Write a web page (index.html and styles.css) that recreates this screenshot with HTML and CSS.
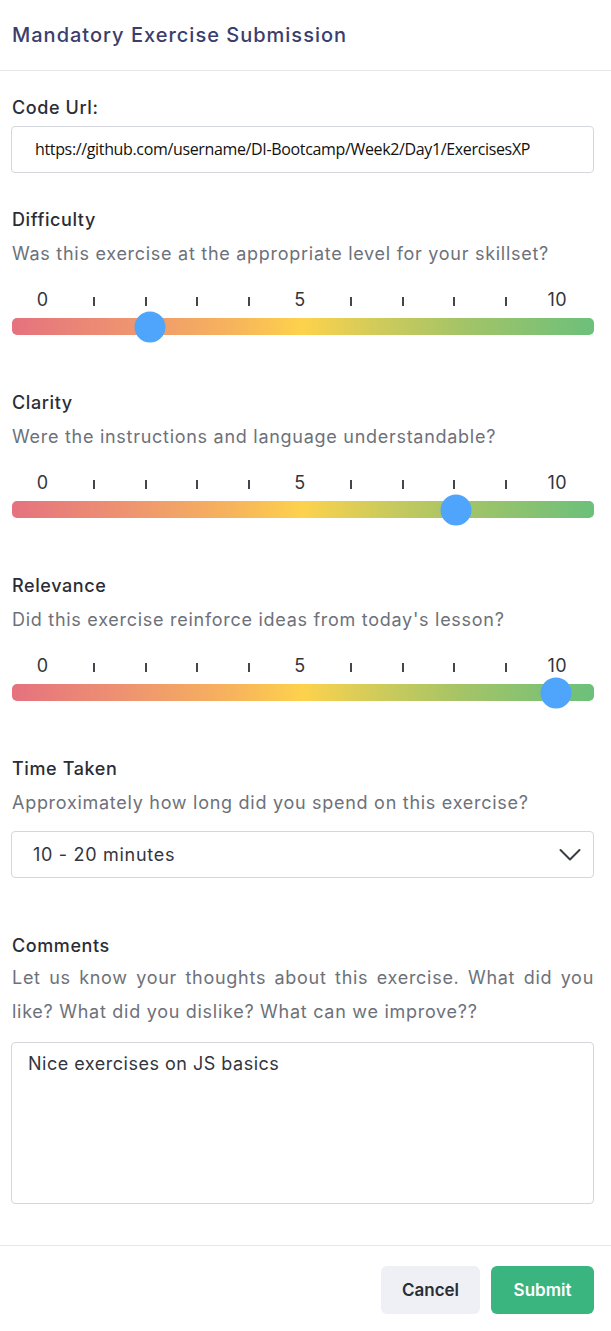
FILE: index.html
```html
<!DOCTYPE html>
<html>
<head>
<meta charset="utf-8">
<link rel="stylesheet" href="styles.css">
</head>
<body>
<div class="header"><h1 class="title">Mandatory Exercise Submission</h1></div>
<div class="content">
  <div class="label code-label">Code Url:</div>
  <div class="input url">https://github.com/username/DI-Bootcamp/Week2/Day1/ExercisesXP</div>

  <div class="label first-title">Difficulty</div>
  <div class="sub">Was this exercise at the appropriate level for your skillset?</div>
  <div class="ticks"><span class="num">0</span><span class="tick"></span><span class="tick"></span><span class="tick"></span><span class="tick"></span><span class="num">5</span><span class="tick"></span><span class="tick"></span><span class="tick"></span><span class="tick"></span><span class="num">10</span></div>
  <div class="track"><span class="thumb" style="left: 23.75%"></span></div>

  <div class="label section-title">Clarity</div>
  <div class="sub">Were the instructions and language understandable?</div>
  <div class="ticks"><span class="num">0</span><span class="tick"></span><span class="tick"></span><span class="tick"></span><span class="tick"></span><span class="num">5</span><span class="tick"></span><span class="tick"></span><span class="tick"></span><span class="tick"></span><span class="num">10</span></div>
  <div class="track"><span class="thumb" style="left: 76.25%"></span></div>

  <div class="label section-title">Relevance</div>
  <div class="sub">Did this exercise reinforce ideas from today's lesson?</div>
  <div class="ticks"><span class="num">0</span><span class="tick"></span><span class="tick"></span><span class="tick"></span><span class="tick"></span><span class="num">5</span><span class="tick"></span><span class="tick"></span><span class="tick"></span><span class="tick"></span><span class="num">10</span></div>
  <div class="track"><span class="thumb" style="left: 93.46%"></span></div>

  <div class="label section-title">Time Taken</div>
  <div class="sub">Approximately how long did you spend on this exercise?</div>
  <div class="select">
    <span>10 - 20 minutes</span>
    <svg class="chev" width="22" height="14" viewBox="0 0 22 14"><path d="M1.5 2 L11 11.5 L20.5 2" fill="none" stroke="#3a3c44" stroke-width="2" stroke-linecap="round" stroke-linejoin="round"/></svg>
  </div>

  <div class="label comments-title">Comments</div>
  <div class="sub sub-comments">Let us know your thoughts about this exercise. What did you like? What did you dislike? What can we improve??</div>
  <div class="textarea">Nice exercises on JS basics</div>
</div>
<div class="footer">
  <button class="btn cancel">Cancel</button>
  <button class="btn submit">Submit</button>
</div>
</body>
</html>
```
FILE: styles.css
```css
* { box-sizing: border-box; }
html, body { margin: 0; padding: 0; background: #fff; }
body {
  font-family: "Inter", "Open Sans", sans-serif;
  width: 611px;
  color: #2b2d36;
}
.header {
  height: 71px;
  border-bottom: 1px solid #e6e7ea;
}
.title {
  margin: 0;
  padding-left: 12px;
  line-height: 70px;
  font-size: 20px;
  font-weight: 500;
  color: #3b3e6c;
  letter-spacing: 1px;
}
.content {
  padding: 0 17px 0 11px;
}
.label {
  font-size: 18px;
  line-height: 24px;
  color: #2b2d36;
  padding-left: 1px;
  font-weight: 500;
  letter-spacing: 0.6px;
}
.code-label { margin-top: 25px; margin-bottom: 6px; }
.input {
  height: 47px;
  border: 1px solid #d3d6dc;
  border-radius: 4px;
}
.url {
  font-family: "Open Sans", "Liberation Sans", sans-serif;
  font-size: 16px;
  letter-spacing: -0.35px;
  color: #111;
  line-height: 45px;
  padding-left: 23px;
}
.first-title { margin-top: 35px; }
.section-title { margin-top: 56px; }
.sub {
  margin-top: 5px;
  font-size: 18px;
  line-height: 34px;
  color: #6d717a;
  padding-left: 1px;
  letter-spacing: 0.72px;
}
.ticks {
  margin-top: 17px;
  height: 24px;
  display: grid;
  grid-template-columns: repeat(11, 1fr);
  padding: 0 11px 0 6px;
  align-items: center;
  justify-items: center;
}
.num {
  font-size: 18px;
  line-height: 24px;
  color: #33353d;
  letter-spacing: 0.5px;
}
.tick {
  width: 2px;
  height: 9px;
  background: #44464e;
  margin-top: 3px;
}
.track {
  position: relative;
  margin-top: 6px;
  margin-left: 1px;
  height: 17px;
  border-radius: 5px;
  background: linear-gradient(to right, #e5727f 0%, #ee9470 20%, #f7b45c 38%, #fdd24c 50%, #cfcb5b 63%, #a5c466 77%, #6cc07b 100%);
}
.thumb {
  position: absolute;
  top: 50%;
  width: 31px;
  height: 31px;
  border-radius: 50%;
  background: #4ea5fb;
  transform: translate(-50%, -50%);
}
.comments-title { margin-top: 56px; }
.select {
  margin-top: 11px;
  height: 47px;
  border: 1px solid #d3d6dc;
  border-radius: 4px;
  display: flex;
  align-items: center;
  justify-content: space-between;
  padding: 0 12px 0 21px;
  font-size: 18px;
  color: #33353d;
  letter-spacing: 0.7px;
}
.chev { display: block; margin-top: 1px; }
.sub-comments {
  margin-top: 3px;
  text-align: justify;
}
.textarea {
  margin-top: 13px;
  height: 162px;
  border: 1px solid #d3d6dc;
  border-radius: 4px;
  padding: 9px 16px;
  font-size: 18px;
  line-height: 24px;
  color: #33353d;
  letter-spacing: 0.5px;
}
.footer {
  margin-top: 41px;
  border-top: 1px solid #e6e7ea;
  padding: 20px 17px 0 0;
  display: flex;
  justify-content: flex-end;
  gap: 11px;
}
.btn {
  font-family: inherit;
  height: 48px;
  border: none;
  border-radius: 6px;
  font-size: 17px;
  font-weight: 600;
  cursor: pointer;
}
.cancel {
  width: 99px;
  background: #eef0f5;
  color: #2b2d36;
}
.submit {
  width: 103px;
  background: #3bb57f;
  color: #fff;
}
```
